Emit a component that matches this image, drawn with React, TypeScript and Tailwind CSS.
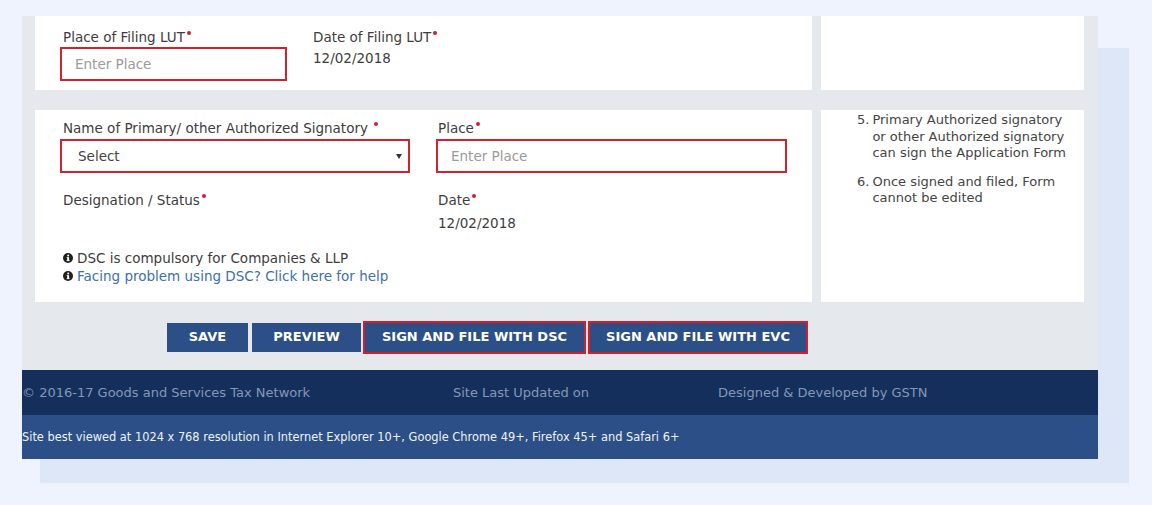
import React from "react";

const Req = () => (
  <span className="relative top-[-7px] ml-[2px] inline-block h-[4px] w-[4px] rounded-full bg-[#d0202e]" />
);

const InfoIcon = () => (
  <svg width="10" height="10" viewBox="0 0 10 10" className="inline-block mr-[4px] relative top-[-1px]">
    <circle cx="5" cy="5" r="5" fill="#1f1f1f" />
    <circle cx="5.2" cy="2.6" r="1" fill="#fff" />
    <rect x="4.2" y="4.2" width="1.9" height="3.6" fill="#fff" />
    <rect x="3.6" y="7.2" width="3" height="0.9" fill="#fff" />
    <rect x="3.6" y="4.2" width="1.6" height="0.8" fill="#fff" />
  </svg>
);

export default function App() {
  return (
    <div className="relative h-[505px] w-[1152px] overflow-hidden bg-[#eef3fd] font-['DejaVu_Sans',Verdana,sans-serif] text-[13.5px] leading-[16px] text-[#3d3d3d]">
      {/* offset backdrop behind the screenshot panel */}
      <div className="absolute left-[40px] top-[48px] h-[435px] w-[1089px] bg-[#dee7f8]" />

      <div className="relative pl-[22px] pt-[16px]">
        <div className="w-[1076px] bg-[#e5e8ec]">
          {/* card row 1 */}
          <div className="flex gap-[9px] pl-[13px]">
            <div className="flex h-[74px] w-[777px] bg-white pl-[25px] pt-[13px]">
              <div className="w-[253px]">
                <div className="pl-[3px]">Place of Filing LUT<Req /></div>
                <div className="mt-[2px] flex h-[34px] w-[227px] items-center border-2 border-[#cf2331] pl-[13px] text-[#9a9a9a]">
                  Enter Place
                </div>
              </div>
              <div>
                <div>Date of Filing LUT<Req /></div>
                <div className="mt-[5px]">12/02/2018</div>
              </div>
            </div>
            <div className="h-[74px] w-[263px] bg-white" />
          </div>

          {/* card row 2 */}
          <div className="mt-[20px] flex gap-[9px] pl-[13px]">
            <div className="h-[192px] w-[777px] bg-white pl-[25px] pt-[10px]">
              <div className="flex gap-[26px]">
                <div className="w-[350px]">
                  <div className="pl-[3px]">Name of Primary/ other Authorized Signatory <Req /></div>
                  <div className="mt-[3px] flex h-[34px] items-center justify-between border-2 border-[#cf2331] pl-[16px] pr-[6px] text-[#444]">
                    <span>Select</span>
                    <svg width="6" height="5" viewBox="0 0 6 5"><path d="M0 0h6L3 5z" fill="#333" /></svg>
                  </div>
                </div>
                <div className="w-[351px]">
                  <div className="pl-[2px]">Place<Req /></div>
                  <div className="mt-[3px] flex h-[34px] items-center border-2 border-[#cf2331] pl-[13px] text-[#9a9a9a]">
                    Enter Place
                  </div>
                </div>
              </div>
              <div className="mt-[19px] flex gap-[26px]">
                <div className="w-[350px] pl-[3px]">Designation / Status<Req /></div>
                <div className="pl-[2px]">
                  <div>Date<Req /></div>
                  <div className="mt-[7px]">12/02/2018</div>
                </div>
              </div>
              <div className="mt-[18px] pl-[3px] leading-[18px]">
                <div><InfoIcon />DSC is compulsory for Companies &amp; LLP</div>
                <div className="text-[#3c70b2]"><InfoIcon />Facing problem using DSC? Click here for help</div>
              </div>
            </div>
            <div className="h-[192px] w-[263px] bg-white pt-[2px] text-[13px] leading-[16.5px] text-[#444]">
              <div className="flex gap-[3px] pl-[36px]">
                <span>5.</span>
                <span className="w-[198px]">Primary Authorized signatory or other Authorized signatory can sign the Application Form</span>
              </div>
              <div className="mt-[12px] flex gap-[3px] pl-[36px]">
                <span>6.</span>
                <span className="w-[198px]">Once signed and filed, Form cannot be edited</span>
              </div>
            </div>
          </div>

          {/* action buttons */}
          <div className="flex h-[68px] items-center pl-[145px] pt-[2px] text-[13px] font-bold text-white">
            <button className="h-[29px] w-[81px] bg-[#2c4f88]">SAVE</button>
            <button className="ml-[4px] h-[29px] w-[109px] bg-[#2c4f88]">PREVIEW</button>
            <button className="ml-[2px] h-[33px] w-[223px] border-2 border-[#d0202e] bg-[#2c4f88]">SIGN AND FILE WITH DSC</button>
            <button className="ml-[2px] h-[33px] w-[220px] border-2 border-[#d0202e] bg-[#2c4f88]">SIGN AND FILE WITH EVC</button>
          </div>

          {/* footer */}
          <div className="flex h-[45px] items-center bg-[#142f5c] text-[13px] text-[#8497b9]">
            <div className="w-[431px]">© 2016-17 Goods and Services Tax Network</div>
            <div className="w-[265px]">Site Last Updated on</div>
            <div>Designed &amp; Developed by GSTN</div>
          </div>
          <div className="flex h-[44px] items-center bg-[#2c4f88] text-[11.4px] text-[#eef2f8]">
            Site best viewed at 1024 x 768 resolution in Internet Explorer 10+, Google Chrome 49+, Firefox 45+ and Safari 6+
          </div>
        </div>
      </div>
    </div>
  );
}
